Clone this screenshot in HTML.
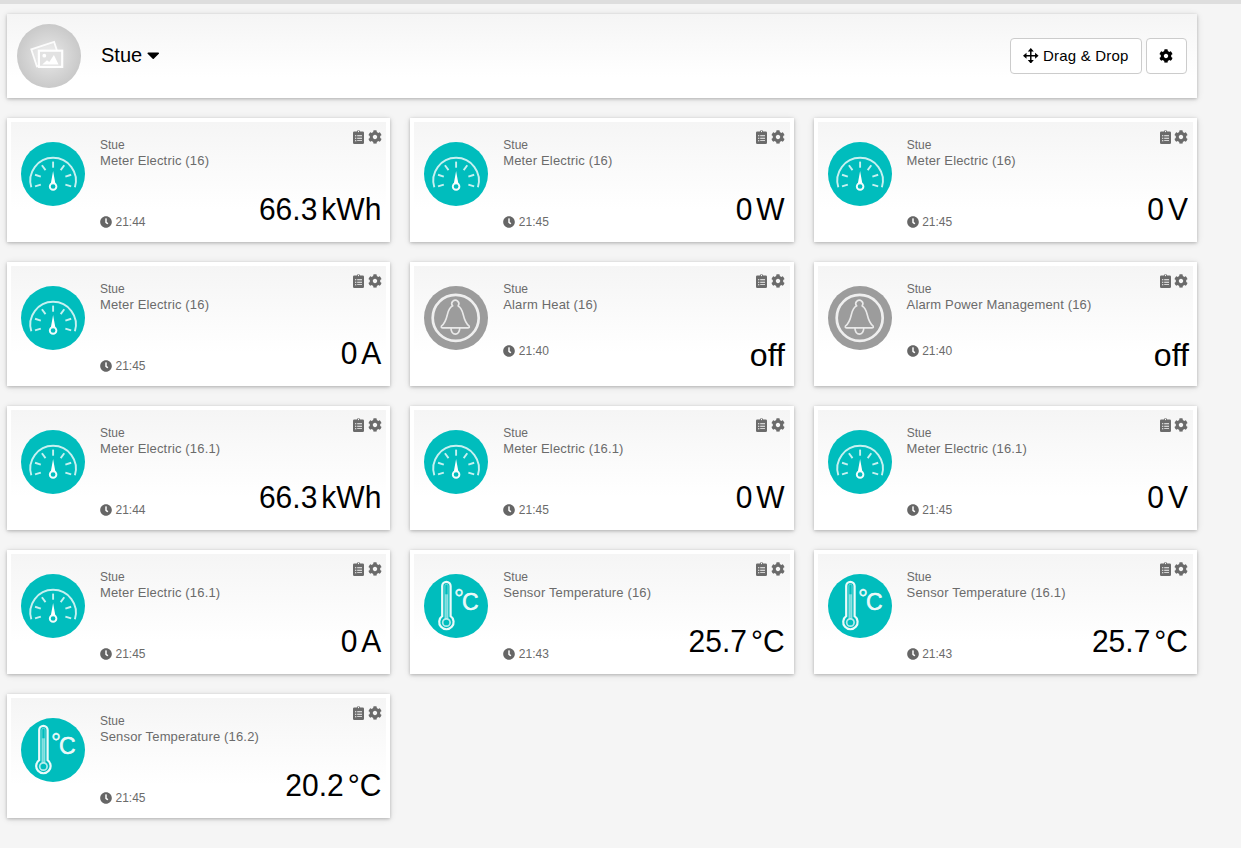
<!DOCTYPE html><html lang="da"><head><meta charset="utf-8"><title>Stue</title><style>
*{box-sizing:border-box;margin:0;padding:0}
html,body{width:1241px;height:848px;overflow:hidden}
body{background:#f5f5f5;font-family:"Liberation Sans",Arial,sans-serif;position:relative;color:#000}
.topbar{position:absolute;left:0;top:0;width:1241px;height:4px;background:#dedede}
.hdr{position:absolute;left:7px;top:14px;width:1190px;height:84px;background:linear-gradient(#f5f5f5,#fff 75%);box-shadow:0 1px 3px rgba(0,0,0,.21),0 1px 7px rgba(0,0,0,.12)}
.hicon{position:absolute;left:10px;top:10px;width:64px;height:64px}
.room{position:absolute;left:94px;top:29px;font-size:20px;line-height:24px;white-space:nowrap}
.caret{display:inline-block;width:12.500px;height:20px;vertical-align:-2.700px;margin-left:5px}
.btn{position:absolute;top:24px;height:36px;border:1px solid #ccc;border-radius:4px;background:#fff;font-size:15px;line-height:34px;white-space:nowrap}
.b1{left:1003px;width:132px}
.b1 .arr{position:absolute;left:12.200px;top:8.600px;width:15.600px;height:15.600px}
.b1 span{position:absolute;left:32px;top:0;letter-spacing:.2px}
.b2{left:1139px;width:41px}
.bcog{position:absolute;left:11.600px;top:10px;width:14px;height:14px}
.card{position:absolute;width:383.330px;height:124px;background:#fff;padding:4px;box-shadow:0 1px 3px rgba(0,0,0,.21),0 1px 7px rgba(0,0,0,.12)}
.in{position:relative;width:100%;height:100%;background:linear-gradient(#f5f5f5,#fff 75%)}
.dev{position:absolute;left:10px;top:20px;width:64px;height:64px}
.loc{position:absolute;left:89px;top:16px;font-size:12px;line-height:14px;color:#6b6b6b;white-space:nowrap}
.ttl{position:absolute;left:88.900px;top:31px;font-size:13px;line-height:15px;color:#6b6b6b;white-space:nowrap;letter-spacing:.16px}
.tm{position:absolute;left:89px;top:93px;font-size:12px;line-height:14px;color:#6b6b6b;white-space:nowrap}
.alarm .tm{top:78px}
.clk{position:absolute;left:0;top:.5px;width:12px;height:12px;color:#666}
.tm span{position:absolute;left:15.500px;top:0}
.tools{position:absolute;right:0;top:0;color:#6b6b6b}
.ico{position:absolute;height:14px}
.clp{right:22.330px;top:7.850px;width:11px}
.cg{right:4.500px;top:7.800px;width:14px}
.val{position:absolute;right:5px;top:70.800px;transform:scaleY(1.074);transform-origin:100% 27px;font-size:30px;line-height:34px;white-space:nowrap;color:#000}
.val .u{margin-left:4px}
.val.off{top:73.100px;right:4.500px;font-size:31px;transform:scaleX(1.035);transform-origin:100% 27px}

</style></head><body>
<div class="topbar"></div>
<div class="hdr"><svg class="hicon" viewBox="0 0 64 64"><defs><radialGradient id="hg" cx="50%" cy="50%" r="50%"><stop offset="0" stop-color="#e9e9e9"/><stop offset="1" stop-color="#c9c9c9"/></radialGradient></defs><circle cx="32" cy="32" r="32" fill="url(#hg)"/><g transform="rotate(-18 25 35)"><rect x="17.800" y="22.500" width="24" height="18" fill="#fff" fill-opacity=".25" stroke="#fff" stroke-opacity=".9" stroke-width="1.800"/></g><rect x="21.900" y="26.700" width="23.300" height="16.200" fill="#e2e2e2" stroke="#fff" stroke-opacity=".95" stroke-width="2.200"/><circle cx="27.300" cy="31.700" r="1.900" fill="#fff"/><path fill="#fff" d="M25.300 40.400L30 36.300L32.300 37.900L36.900 31L41.600 40.400Z"/></svg><div class="room">Stue<svg class="caret" viewBox="0 0 320 512"><path fill="currentColor" d="M31.300 192h257.300c17.800 0 26.700 21.500 14.100 34.100L174.100 354.800c-7.800 7.800-20.500 7.800-28.300 0L17.200 226.100C4.600 213.500 13.500 192 31.300 192z"/></svg></div>
<div class="btn b1"><svg class="arr" viewBox="0 0 16 16"><path fill="currentColor" d="M8 0L11.100 3.600H8.750V7.250H12.400V4.900L16 8L12.400 11.100V8.750H8.750V12.400H11.100L8 16L4.900 12.400H7.250V8.750H3.600V11.100L0 8L3.600 4.900V7.250H7.250V3.600H4.900Z"/></svg><span>Drag &amp; Drop</span></div>
<div class="btn b2"><svg class="bcog" viewBox="0 0 512 512"><path fill="currentColor" d="M487.4 315.7l-42.6-24.6c4.3-23.2 4.3-47 0-70.2l42.6-24.6c4.9-2.800 7.100-8.600 5.500-14-11.100-35.600-30-67.800-54.700-94.600-3.800-4.100-10-5.100-14.800-2.300L380.800 110c-17.900-15.400-38.500-27.300-60.800-35.100V25.800c0-5.600-3.900-10.500-9.400-11.700-36.700-8.200-74.300-7.800-109.200 0-5.500 1.200-9.400 6.100-9.400 11.700V75c-22.200 7.900-42.800 19.800-60.800 35.100L88.700 85.500c-4.900-2.800-11-1.900-14.800 2.300-24.700 26.700-43.600 58.900-54.700 94.600-1.700 5.400.6 11.200 5.500 14L67.300 221c-4.300 23.200-4.300 47 0 70.200l-42.600 24.600c-4.900 2.800-7.100 8.600-5.500 14 11.100 35.600 30 67.800 54.700 94.600 3.800 4.100 10 5.100 14.800 2.300l42.600-24.600c17.900 15.400 38.500 27.300 60.800 35.100v49.200c0 5.600 3.900 10.500 9.400 11.700 36.700 8.200 74.300 7.800 109.200 0 5.500-1.200 9.400-6.100 9.400-11.700v-49.200c22.200-7.900 42.800-19.800 60.800-35.100l42.600 24.600c4.900 2.800 11 1.900 14.800-2.300 24.700-26.700 43.600-58.900 54.700-94.600 1.500-5.500-.7-11.300-5.600-14.100zM256 336c-44.100 0-80-35.900-80-80s35.900-80 80-80 80 35.900 80 80-35.900 80-80 80z"/></svg></div></div>
<div class="card" style="left:7px;top:118px"><div class="in">
<svg class="dev" viewBox="0 0 64 64"><circle cx="32" cy="32" r="32" fill="#00bdbd"/><g fill="none" stroke="#fff" stroke-opacity=".78" stroke-width="1.9"><path d="M10.30 45.3A22.8 22.8 0 1 1 53.90 45.3"/><path d="M19.83 42.59L14.03 44.47"/><path d="M19.83 34.61L14.03 32.73"/><path d="M24.52 28.16L20.93 23.23"/><path d="M32.10 25.70L32.10 19.60"/><path d="M39.68 28.16L43.27 23.23"/><path d="M44.37 34.61L50.17 32.73"/><path d="M44.37 42.59L50.17 44.47"/><circle cx="32.1" cy="44.500" r="3.300" stroke-opacity=".95"/></g><path fill="#fff" d="M32.1 28.9L34.4 41.8Q32.1 40.4 29.8 41.8Z"/></svg>
<div class="loc">Stue</div><div class="ttl">Meter Electric (16)</div>
<div class="tm"><svg class="clk" viewBox="0 0 512 512"><path fill="currentColor" d="M256,8C119,8,8,119,8,256S119,504,256,504,504,393,504,256,393,8,256,8Zm92.49,313h0l-20,25a16,16,0,0,1-22.490,2.500h0l-67-49.720a40,40,0,0,1-15-31.230V112a16,16,0,0,1,16-16h32a16,16,0,0,1,16,16V256l58,42.500A16,16,0,0,1,348.490,321Z"/></svg><span>21:44</span></div>
<div class="tools"><svg class="ico clp" viewBox="0 0 11 14"><path fill="currentColor" fill-rule="evenodd" d="M1.300 1.500H3.800A1.750 1.750 0 0 1 7.200 1.500H9.700A1.300 1.300 0 0 1 11 2.800V12.700A1.300 1.300 0 0 1 9.700 14H1.300A1.300 1.300 0 0 1 0 12.700V2.800A1.300 1.300 0 0 1 1.300 1.500ZM5.500 .850a.65.65 0 1 1 0 1.300a.65.65 0 1 1 0-1.300zM2 5.200h1.300v1h-1.300z M2 7.700h1.300v1h-1.300z M2 10.150h1.300v1h-1.300zM4.200 5.250h4.800v.9h-4.800z M4.200 7.750h4.800v.9h-4.800z M4.200 10.200h4.800v.9h-4.800z"/></svg><svg class="ico cg" viewBox="0 0 512 512"><path fill="currentColor" d="M487.4 315.7l-42.6-24.6c4.3-23.2 4.3-47 0-70.2l42.6-24.6c4.9-2.800 7.100-8.600 5.500-14-11.100-35.600-30-67.800-54.700-94.600-3.800-4.100-10-5.100-14.800-2.300L380.800 110c-17.900-15.400-38.500-27.300-60.800-35.100V25.800c0-5.600-3.900-10.500-9.400-11.700-36.700-8.200-74.300-7.800-109.200 0-5.500 1.200-9.400 6.100-9.400 11.700V75c-22.200 7.900-42.800 19.800-60.800 35.100L88.700 85.500c-4.900-2.800-11-1.900-14.800 2.300-24.700 26.700-43.600 58.900-54.700 94.600-1.700 5.400.6 11.200 5.500 14L67.300 221c-4.300 23.200-4.300 47 0 70.200l-42.600 24.600c-4.900 2.800-7.100 8.600-5.500 14 11.100 35.600 30 67.800 54.700 94.600 3.800 4.100 10 5.100 14.800 2.300l42.600-24.600c17.900 15.400 38.500 27.300 60.800 35.100v49.200c0 5.600 3.900 10.500 9.400 11.700 36.700 8.200 74.300 7.800 109.200 0 5.500-1.200 9.400-6.100 9.400-11.700v-49.200c22.200-7.900 42.800-19.800 60.800-35.100l42.600 24.600c4.900 2.800 11 1.900 14.800-2.300 24.700-26.700 43.600-58.900 54.700-94.600 1.500-5.500-.7-11.300-5.600-14.100zM256 336c-44.100 0-80-35.900-80-80s35.900-80 80-80 80 35.900 80 80-35.900 80-80 80z"/></svg></div>
<div class="val"><span class="v">66.3</span><span class="u">kWh</span></div>
</div></div>
<div class="card" style="left:410.33px;top:118px"><div class="in">
<svg class="dev" viewBox="0 0 64 64"><circle cx="32" cy="32" r="32" fill="#00bdbd"/><g fill="none" stroke="#fff" stroke-opacity=".78" stroke-width="1.9"><path d="M10.30 45.3A22.8 22.8 0 1 1 53.90 45.3"/><path d="M19.83 42.59L14.03 44.47"/><path d="M19.83 34.61L14.03 32.73"/><path d="M24.52 28.16L20.93 23.23"/><path d="M32.10 25.70L32.10 19.60"/><path d="M39.68 28.16L43.27 23.23"/><path d="M44.37 34.61L50.17 32.73"/><path d="M44.37 42.59L50.17 44.47"/><circle cx="32.1" cy="44.500" r="3.300" stroke-opacity=".95"/></g><path fill="#fff" d="M32.1 28.9L34.4 41.8Q32.1 40.4 29.8 41.8Z"/></svg>
<div class="loc">Stue</div><div class="ttl">Meter Electric (16)</div>
<div class="tm"><svg class="clk" viewBox="0 0 512 512"><path fill="currentColor" d="M256,8C119,8,8,119,8,256S119,504,256,504,504,393,504,256,393,8,256,8Zm92.49,313h0l-20,25a16,16,0,0,1-22.490,2.500h0l-67-49.720a40,40,0,0,1-15-31.230V112a16,16,0,0,1,16-16h32a16,16,0,0,1,16,16V256l58,42.500A16,16,0,0,1,348.490,321Z"/></svg><span>21:45</span></div>
<div class="tools"><svg class="ico clp" viewBox="0 0 11 14"><path fill="currentColor" fill-rule="evenodd" d="M1.300 1.500H3.800A1.750 1.750 0 0 1 7.200 1.500H9.700A1.300 1.300 0 0 1 11 2.800V12.700A1.300 1.300 0 0 1 9.700 14H1.300A1.300 1.300 0 0 1 0 12.700V2.800A1.300 1.300 0 0 1 1.300 1.500ZM5.500 .850a.65.65 0 1 1 0 1.300a.65.65 0 1 1 0-1.300zM2 5.200h1.300v1h-1.300z M2 7.700h1.300v1h-1.300z M2 10.150h1.300v1h-1.300zM4.200 5.250h4.800v.9h-4.800z M4.200 7.750h4.800v.9h-4.800z M4.200 10.200h4.800v.9h-4.800z"/></svg><svg class="ico cg" viewBox="0 0 512 512"><path fill="currentColor" d="M487.4 315.7l-42.6-24.6c4.3-23.2 4.3-47 0-70.2l42.6-24.6c4.9-2.800 7.100-8.600 5.500-14-11.100-35.600-30-67.800-54.700-94.600-3.800-4.100-10-5.100-14.800-2.300L380.800 110c-17.900-15.400-38.500-27.300-60.800-35.100V25.800c0-5.600-3.900-10.500-9.400-11.700-36.700-8.200-74.300-7.800-109.200 0-5.500 1.200-9.400 6.100-9.400 11.700V75c-22.200 7.900-42.800 19.800-60.800 35.100L88.700 85.500c-4.900-2.800-11-1.900-14.800 2.300-24.700 26.700-43.600 58.900-54.700 94.600-1.700 5.400.6 11.200 5.500 14L67.300 221c-4.300 23.200-4.300 47 0 70.200l-42.600 24.600c-4.900 2.800-7.100 8.600-5.500 14 11.100 35.600 30 67.800 54.700 94.600 3.800 4.100 10 5.100 14.800 2.300l42.600-24.600c17.900 15.400 38.500 27.300 60.800 35.100v49.200c0 5.600 3.900 10.500 9.400 11.700 36.700 8.200 74.300 7.800 109.200 0 5.500-1.200 9.400-6.100 9.400-11.700v-49.200c22.200-7.900 42.800-19.800 60.800-35.100l42.600 24.600c4.900 2.800 11 1.900 14.800-2.300 24.700-26.700 43.600-58.900 54.700-94.600 1.500-5.500-.7-11.300-5.600-14.100zM256 336c-44.100 0-80-35.900-80-80s35.900-80 80-80 80 35.900 80 80-35.900 80-80 80z"/></svg></div>
<div class="val"><span class="v">0</span><span class="u">W</span></div>
</div></div>
<div class="card" style="left:813.67px;top:118px"><div class="in">
<svg class="dev" viewBox="0 0 64 64"><circle cx="32" cy="32" r="32" fill="#00bdbd"/><g fill="none" stroke="#fff" stroke-opacity=".78" stroke-width="1.9"><path d="M10.30 45.3A22.8 22.8 0 1 1 53.90 45.3"/><path d="M19.83 42.59L14.03 44.47"/><path d="M19.83 34.61L14.03 32.73"/><path d="M24.52 28.16L20.93 23.23"/><path d="M32.10 25.70L32.10 19.60"/><path d="M39.68 28.16L43.27 23.23"/><path d="M44.37 34.61L50.17 32.73"/><path d="M44.37 42.59L50.17 44.47"/><circle cx="32.1" cy="44.500" r="3.300" stroke-opacity=".95"/></g><path fill="#fff" d="M32.1 28.9L34.4 41.8Q32.1 40.4 29.8 41.8Z"/></svg>
<div class="loc">Stue</div><div class="ttl">Meter Electric (16)</div>
<div class="tm"><svg class="clk" viewBox="0 0 512 512"><path fill="currentColor" d="M256,8C119,8,8,119,8,256S119,504,256,504,504,393,504,256,393,8,256,8Zm92.49,313h0l-20,25a16,16,0,0,1-22.490,2.500h0l-67-49.720a40,40,0,0,1-15-31.230V112a16,16,0,0,1,16-16h32a16,16,0,0,1,16,16V256l58,42.500A16,16,0,0,1,348.490,321Z"/></svg><span>21:45</span></div>
<div class="tools"><svg class="ico clp" viewBox="0 0 11 14"><path fill="currentColor" fill-rule="evenodd" d="M1.300 1.500H3.800A1.750 1.750 0 0 1 7.200 1.500H9.700A1.300 1.300 0 0 1 11 2.800V12.700A1.300 1.300 0 0 1 9.700 14H1.300A1.300 1.300 0 0 1 0 12.700V2.800A1.300 1.300 0 0 1 1.300 1.500ZM5.500 .850a.65.65 0 1 1 0 1.300a.65.65 0 1 1 0-1.300zM2 5.200h1.300v1h-1.300z M2 7.700h1.300v1h-1.300z M2 10.150h1.300v1h-1.300zM4.200 5.250h4.800v.9h-4.800z M4.200 7.750h4.800v.9h-4.800z M4.200 10.200h4.800v.9h-4.800z"/></svg><svg class="ico cg" viewBox="0 0 512 512"><path fill="currentColor" d="M487.4 315.7l-42.6-24.6c4.3-23.2 4.3-47 0-70.2l42.6-24.6c4.9-2.800 7.100-8.600 5.500-14-11.100-35.600-30-67.800-54.700-94.600-3.800-4.100-10-5.100-14.800-2.300L380.800 110c-17.900-15.400-38.500-27.300-60.800-35.100V25.800c0-5.600-3.900-10.500-9.400-11.700-36.700-8.200-74.300-7.800-109.200 0-5.500 1.200-9.400 6.100-9.400 11.700V75c-22.200 7.900-42.800 19.800-60.800 35.100L88.700 85.500c-4.900-2.800-11-1.900-14.800 2.300-24.700 26.700-43.600 58.900-54.700 94.600-1.700 5.400.6 11.200 5.500 14L67.300 221c-4.300 23.200-4.300 47 0 70.200l-42.600 24.600c-4.900 2.800-7.100 8.600-5.500 14 11.100 35.600 30 67.800 54.700 94.600 3.800 4.100 10 5.100 14.800 2.300l42.600-24.600c17.900 15.400 38.500 27.300 60.800 35.100v49.200c0 5.600 3.900 10.500 9.400 11.700 36.700 8.200 74.300 7.800 109.200 0 5.500-1.200 9.400-6.100 9.400-11.700v-49.200c22.200-7.900 42.800-19.800 60.800-35.100l42.600 24.600c4.900 2.800 11 1.900 14.800-2.300 24.700-26.700 43.600-58.900 54.700-94.600 1.500-5.500-.7-11.300-5.600-14.100zM256 336c-44.100 0-80-35.900-80-80s35.900-80 80-80 80 35.900 80 80-35.900 80-80 80z"/></svg></div>
<div class="val"><span class="v">0</span><span class="u">V</span></div>
</div></div>
<div class="card" style="left:7px;top:262px"><div class="in">
<svg class="dev" viewBox="0 0 64 64"><circle cx="32" cy="32" r="32" fill="#00bdbd"/><g fill="none" stroke="#fff" stroke-opacity=".78" stroke-width="1.9"><path d="M10.30 45.3A22.8 22.8 0 1 1 53.90 45.3"/><path d="M19.83 42.59L14.03 44.47"/><path d="M19.83 34.61L14.03 32.73"/><path d="M24.52 28.16L20.93 23.23"/><path d="M32.10 25.70L32.10 19.60"/><path d="M39.68 28.16L43.27 23.23"/><path d="M44.37 34.61L50.17 32.73"/><path d="M44.37 42.59L50.17 44.47"/><circle cx="32.1" cy="44.500" r="3.300" stroke-opacity=".95"/></g><path fill="#fff" d="M32.1 28.9L34.4 41.8Q32.1 40.4 29.8 41.8Z"/></svg>
<div class="loc">Stue</div><div class="ttl">Meter Electric (16)</div>
<div class="tm"><svg class="clk" viewBox="0 0 512 512"><path fill="currentColor" d="M256,8C119,8,8,119,8,256S119,504,256,504,504,393,504,256,393,8,256,8Zm92.49,313h0l-20,25a16,16,0,0,1-22.490,2.500h0l-67-49.720a40,40,0,0,1-15-31.230V112a16,16,0,0,1,16-16h32a16,16,0,0,1,16,16V256l58,42.500A16,16,0,0,1,348.490,321Z"/></svg><span>21:45</span></div>
<div class="tools"><svg class="ico clp" viewBox="0 0 11 14"><path fill="currentColor" fill-rule="evenodd" d="M1.300 1.500H3.800A1.750 1.750 0 0 1 7.200 1.500H9.700A1.300 1.300 0 0 1 11 2.800V12.700A1.300 1.300 0 0 1 9.700 14H1.300A1.300 1.300 0 0 1 0 12.700V2.800A1.300 1.300 0 0 1 1.300 1.500ZM5.500 .850a.65.65 0 1 1 0 1.300a.65.65 0 1 1 0-1.300zM2 5.200h1.300v1h-1.300z M2 7.700h1.300v1h-1.300z M2 10.150h1.300v1h-1.300zM4.200 5.250h4.800v.9h-4.800z M4.200 7.750h4.800v.9h-4.800z M4.200 10.200h4.800v.9h-4.800z"/></svg><svg class="ico cg" viewBox="0 0 512 512"><path fill="currentColor" d="M487.4 315.7l-42.6-24.6c4.3-23.2 4.3-47 0-70.2l42.6-24.6c4.9-2.800 7.100-8.600 5.500-14-11.100-35.600-30-67.800-54.700-94.600-3.800-4.100-10-5.100-14.800-2.300L380.800 110c-17.900-15.400-38.500-27.300-60.800-35.100V25.800c0-5.600-3.900-10.500-9.400-11.700-36.700-8.200-74.300-7.800-109.200 0-5.500 1.200-9.400 6.100-9.400 11.700V75c-22.200 7.900-42.800 19.800-60.800 35.100L88.700 85.500c-4.900-2.800-11-1.900-14.800 2.300-24.700 26.700-43.600 58.900-54.700 94.600-1.700 5.400.6 11.200 5.500 14L67.300 221c-4.300 23.200-4.300 47 0 70.200l-42.600 24.600c-4.900 2.800-7.100 8.600-5.500 14 11.100 35.600 30 67.800 54.700 94.600 3.800 4.100 10 5.100 14.800 2.300l42.600-24.600c17.900 15.400 38.500 27.300 60.800 35.100v49.200c0 5.600 3.900 10.500 9.400 11.700 36.700 8.200 74.300 7.800 109.200 0 5.500-1.200 9.400-6.100 9.400-11.700v-49.200c22.200-7.900 42.800-19.800 60.800-35.100l42.600 24.600c4.900 2.800 11 1.900 14.800-2.300 24.700-26.700 43.600-58.900 54.700-94.600 1.500-5.500-.7-11.300-5.600-14.100zM256 336c-44.100 0-80-35.900-80-80s35.900-80 80-80 80 35.900 80 80-35.900 80-80 80z"/></svg></div>
<div class="val"><span class="v">0</span><span class="u">A</span></div>
</div></div>
<div class="card alarm" style="left:410.33px;top:262px"><div class="in">
<svg class="dev" viewBox="0 0 64 64"><circle cx="32" cy="32" r="32" fill="#9c9c9c"/><circle cx="31.7" cy="31.9" r="23" fill="none" stroke="#fff" stroke-opacity=".84" stroke-width="2.700"/><g fill="none" stroke="#fff" stroke-opacity=".78" stroke-width="1.600" stroke-linejoin="round"><path d="M28.500 19.900A3.500 3.500 0 1 1 34.100 19.900C36.500 21 38 23.500 39.200 28.500C40.700 35 42.500 38 45.200 40.200Q45.800 41.900 43.800 41.900L18.800 41.900Q16.800 41.900 17.400 40.200C20.100 38 21.900 35 23.400 28.500C24.600 23.500 26.100 21 28.800 19.800Z"/><path d="M26.900 42.300A4.500 6.800 0 0 0 35.800 42.300"/></g></svg>
<div class="loc">Stue</div><div class="ttl">Alarm Heat (16)</div>
<div class="tm"><svg class="clk" viewBox="0 0 512 512"><path fill="currentColor" d="M256,8C119,8,8,119,8,256S119,504,256,504,504,393,504,256,393,8,256,8Zm92.49,313h0l-20,25a16,16,0,0,1-22.490,2.500h0l-67-49.720a40,40,0,0,1-15-31.230V112a16,16,0,0,1,16-16h32a16,16,0,0,1,16,16V256l58,42.500A16,16,0,0,1,348.490,321Z"/></svg><span>21:40</span></div>
<div class="tools"><svg class="ico clp" viewBox="0 0 11 14"><path fill="currentColor" fill-rule="evenodd" d="M1.300 1.500H3.800A1.750 1.750 0 0 1 7.200 1.500H9.700A1.300 1.300 0 0 1 11 2.800V12.700A1.300 1.300 0 0 1 9.700 14H1.300A1.300 1.300 0 0 1 0 12.700V2.800A1.300 1.300 0 0 1 1.300 1.500ZM5.500 .850a.65.65 0 1 1 0 1.300a.65.65 0 1 1 0-1.300zM2 5.200h1.300v1h-1.300z M2 7.700h1.300v1h-1.300z M2 10.150h1.300v1h-1.300zM4.200 5.250h4.800v.9h-4.800z M4.200 7.750h4.800v.9h-4.800z M4.200 10.200h4.800v.9h-4.800z"/></svg><svg class="ico cg" viewBox="0 0 512 512"><path fill="currentColor" d="M487.4 315.7l-42.6-24.6c4.3-23.2 4.3-47 0-70.2l42.6-24.6c4.9-2.800 7.100-8.600 5.500-14-11.100-35.600-30-67.800-54.700-94.600-3.800-4.100-10-5.100-14.800-2.300L380.800 110c-17.900-15.400-38.500-27.300-60.800-35.100V25.800c0-5.600-3.900-10.500-9.400-11.700-36.700-8.200-74.300-7.800-109.200 0-5.500 1.200-9.400 6.100-9.400 11.700V75c-22.200 7.900-42.800 19.800-60.800 35.100L88.700 85.500c-4.900-2.800-11-1.900-14.800 2.300-24.700 26.700-43.600 58.900-54.700 94.600-1.700 5.400.6 11.200 5.500 14L67.300 221c-4.300 23.200-4.300 47 0 70.200l-42.600 24.600c-4.900 2.800-7.100 8.600-5.500 14 11.100 35.600 30 67.800 54.700 94.600 3.800 4.100 10 5.100 14.800 2.300l42.600-24.600c17.900 15.400 38.500 27.300 60.800 35.100v49.200c0 5.600 3.900 10.500 9.400 11.700 36.700 8.200 74.300 7.800 109.200 0 5.500-1.200 9.400-6.100 9.400-11.700v-49.200c22.200-7.900 42.800-19.800 60.800-35.100l42.600 24.600c4.900 2.800 11 1.900 14.800-2.300 24.700-26.700 43.600-58.900 54.700-94.600 1.500-5.500-.7-11.300-5.600-14.100zM256 336c-44.100 0-80-35.900-80-80s35.900-80 80-80 80 35.900 80 80-35.900 80-80 80z"/></svg></div>
<div class="val off"><span class="v">off</span></div>
</div></div>
<div class="card alarm" style="left:813.67px;top:262px"><div class="in">
<svg class="dev" viewBox="0 0 64 64"><circle cx="32" cy="32" r="32" fill="#9c9c9c"/><circle cx="31.7" cy="31.9" r="23" fill="none" stroke="#fff" stroke-opacity=".84" stroke-width="2.700"/><g fill="none" stroke="#fff" stroke-opacity=".78" stroke-width="1.600" stroke-linejoin="round"><path d="M28.500 19.900A3.500 3.500 0 1 1 34.100 19.900C36.500 21 38 23.500 39.200 28.500C40.700 35 42.500 38 45.200 40.200Q45.800 41.900 43.800 41.900L18.800 41.900Q16.800 41.900 17.400 40.200C20.100 38 21.900 35 23.400 28.500C24.600 23.500 26.100 21 28.800 19.800Z"/><path d="M26.900 42.300A4.500 6.800 0 0 0 35.800 42.300"/></g></svg>
<div class="loc">Stue</div><div class="ttl">Alarm Power Management (16)</div>
<div class="tm"><svg class="clk" viewBox="0 0 512 512"><path fill="currentColor" d="M256,8C119,8,8,119,8,256S119,504,256,504,504,393,504,256,393,8,256,8Zm92.49,313h0l-20,25a16,16,0,0,1-22.490,2.500h0l-67-49.720a40,40,0,0,1-15-31.230V112a16,16,0,0,1,16-16h32a16,16,0,0,1,16,16V256l58,42.500A16,16,0,0,1,348.490,321Z"/></svg><span>21:40</span></div>
<div class="tools"><svg class="ico clp" viewBox="0 0 11 14"><path fill="currentColor" fill-rule="evenodd" d="M1.300 1.500H3.800A1.750 1.750 0 0 1 7.200 1.500H9.700A1.300 1.300 0 0 1 11 2.800V12.700A1.300 1.300 0 0 1 9.700 14H1.300A1.300 1.300 0 0 1 0 12.700V2.800A1.300 1.300 0 0 1 1.300 1.500ZM5.500 .850a.65.65 0 1 1 0 1.300a.65.65 0 1 1 0-1.300zM2 5.200h1.300v1h-1.300z M2 7.700h1.300v1h-1.300z M2 10.150h1.300v1h-1.300zM4.200 5.250h4.800v.9h-4.800z M4.200 7.750h4.800v.9h-4.800z M4.200 10.200h4.800v.9h-4.800z"/></svg><svg class="ico cg" viewBox="0 0 512 512"><path fill="currentColor" d="M487.4 315.7l-42.6-24.6c4.3-23.2 4.3-47 0-70.2l42.6-24.6c4.9-2.800 7.100-8.600 5.500-14-11.100-35.600-30-67.800-54.700-94.600-3.800-4.100-10-5.100-14.800-2.300L380.800 110c-17.900-15.400-38.500-27.300-60.800-35.100V25.800c0-5.600-3.900-10.500-9.400-11.700-36.700-8.200-74.300-7.800-109.200 0-5.500 1.200-9.400 6.100-9.400 11.700V75c-22.200 7.900-42.800 19.800-60.800 35.100L88.700 85.500c-4.900-2.800-11-1.900-14.800 2.300-24.700 26.700-43.600 58.900-54.700 94.600-1.700 5.400.6 11.200 5.500 14L67.300 221c-4.300 23.200-4.300 47 0 70.200l-42.600 24.600c-4.900 2.800-7.100 8.600-5.500 14 11.100 35.600 30 67.800 54.700 94.600 3.800 4.100 10 5.100 14.800 2.300l42.600-24.600c17.900 15.400 38.500 27.300 60.800 35.100v49.200c0 5.600 3.900 10.500 9.400 11.700 36.700 8.200 74.300 7.800 109.200 0 5.500-1.200 9.400-6.100 9.400-11.700v-49.200c22.200-7.900 42.800-19.800 60.800-35.100l42.600 24.600c4.900 2.800 11 1.900 14.800-2.300 24.700-26.700 43.600-58.900 54.700-94.600 1.500-5.500-.7-11.300-5.600-14.100zM256 336c-44.100 0-80-35.900-80-80s35.900-80 80-80 80 35.900 80 80-35.900 80-80 80z"/></svg></div>
<div class="val off"><span class="v">off</span></div>
</div></div>
<div class="card" style="left:7px;top:406px"><div class="in">
<svg class="dev" viewBox="0 0 64 64"><circle cx="32" cy="32" r="32" fill="#00bdbd"/><g fill="none" stroke="#fff" stroke-opacity=".78" stroke-width="1.9"><path d="M10.30 45.3A22.8 22.8 0 1 1 53.90 45.3"/><path d="M19.83 42.59L14.03 44.47"/><path d="M19.83 34.61L14.03 32.73"/><path d="M24.52 28.16L20.93 23.23"/><path d="M32.10 25.70L32.10 19.60"/><path d="M39.68 28.16L43.27 23.23"/><path d="M44.37 34.61L50.17 32.73"/><path d="M44.37 42.59L50.17 44.47"/><circle cx="32.1" cy="44.500" r="3.300" stroke-opacity=".95"/></g><path fill="#fff" d="M32.1 28.9L34.4 41.8Q32.1 40.4 29.8 41.8Z"/></svg>
<div class="loc">Stue</div><div class="ttl">Meter Electric (16.1)</div>
<div class="tm"><svg class="clk" viewBox="0 0 512 512"><path fill="currentColor" d="M256,8C119,8,8,119,8,256S119,504,256,504,504,393,504,256,393,8,256,8Zm92.49,313h0l-20,25a16,16,0,0,1-22.490,2.500h0l-67-49.720a40,40,0,0,1-15-31.230V112a16,16,0,0,1,16-16h32a16,16,0,0,1,16,16V256l58,42.500A16,16,0,0,1,348.490,321Z"/></svg><span>21:44</span></div>
<div class="tools"><svg class="ico clp" viewBox="0 0 11 14"><path fill="currentColor" fill-rule="evenodd" d="M1.300 1.500H3.800A1.750 1.750 0 0 1 7.200 1.500H9.700A1.300 1.300 0 0 1 11 2.800V12.700A1.300 1.300 0 0 1 9.700 14H1.300A1.300 1.300 0 0 1 0 12.700V2.800A1.300 1.300 0 0 1 1.300 1.500ZM5.500 .850a.65.65 0 1 1 0 1.300a.65.65 0 1 1 0-1.300zM2 5.200h1.300v1h-1.300z M2 7.700h1.300v1h-1.300z M2 10.150h1.300v1h-1.300zM4.200 5.250h4.800v.9h-4.800z M4.200 7.750h4.800v.9h-4.800z M4.200 10.200h4.800v.9h-4.800z"/></svg><svg class="ico cg" viewBox="0 0 512 512"><path fill="currentColor" d="M487.4 315.7l-42.6-24.6c4.3-23.2 4.3-47 0-70.2l42.6-24.6c4.9-2.800 7.100-8.600 5.500-14-11.100-35.600-30-67.800-54.700-94.600-3.800-4.100-10-5.100-14.800-2.300L380.800 110c-17.900-15.400-38.500-27.300-60.800-35.100V25.800c0-5.600-3.900-10.500-9.400-11.700-36.700-8.200-74.300-7.800-109.200 0-5.500 1.200-9.400 6.100-9.400 11.700V75c-22.200 7.900-42.800 19.800-60.800 35.100L88.700 85.500c-4.900-2.800-11-1.900-14.800 2.300-24.700 26.700-43.600 58.900-54.700 94.600-1.700 5.400.6 11.200 5.500 14L67.300 221c-4.300 23.200-4.300 47 0 70.200l-42.600 24.600c-4.900 2.800-7.100 8.600-5.500 14 11.100 35.600 30 67.800 54.700 94.600 3.800 4.100 10 5.100 14.800 2.300l42.600-24.600c17.900 15.400 38.500 27.300 60.800 35.100v49.200c0 5.600 3.900 10.500 9.400 11.700 36.700 8.200 74.300 7.800 109.200 0 5.500-1.200 9.400-6.100 9.400-11.700v-49.200c22.200-7.900 42.800-19.800 60.800-35.100l42.600 24.600c4.900 2.800 11 1.900 14.800-2.300 24.700-26.700 43.600-58.900 54.700-94.600 1.500-5.500-.7-11.300-5.600-14.100zM256 336c-44.100 0-80-35.900-80-80s35.900-80 80-80 80 35.900 80 80-35.900 80-80 80z"/></svg></div>
<div class="val"><span class="v">66.3</span><span class="u">kWh</span></div>
</div></div>
<div class="card" style="left:410.33px;top:406px"><div class="in">
<svg class="dev" viewBox="0 0 64 64"><circle cx="32" cy="32" r="32" fill="#00bdbd"/><g fill="none" stroke="#fff" stroke-opacity=".78" stroke-width="1.9"><path d="M10.30 45.3A22.8 22.8 0 1 1 53.90 45.3"/><path d="M19.83 42.59L14.03 44.47"/><path d="M19.83 34.61L14.03 32.73"/><path d="M24.52 28.16L20.93 23.23"/><path d="M32.10 25.70L32.10 19.60"/><path d="M39.68 28.16L43.27 23.23"/><path d="M44.37 34.61L50.17 32.73"/><path d="M44.37 42.59L50.17 44.47"/><circle cx="32.1" cy="44.500" r="3.300" stroke-opacity=".95"/></g><path fill="#fff" d="M32.1 28.9L34.4 41.8Q32.1 40.4 29.8 41.8Z"/></svg>
<div class="loc">Stue</div><div class="ttl">Meter Electric (16.1)</div>
<div class="tm"><svg class="clk" viewBox="0 0 512 512"><path fill="currentColor" d="M256,8C119,8,8,119,8,256S119,504,256,504,504,393,504,256,393,8,256,8Zm92.49,313h0l-20,25a16,16,0,0,1-22.490,2.500h0l-67-49.720a40,40,0,0,1-15-31.230V112a16,16,0,0,1,16-16h32a16,16,0,0,1,16,16V256l58,42.500A16,16,0,0,1,348.490,321Z"/></svg><span>21:45</span></div>
<div class="tools"><svg class="ico clp" viewBox="0 0 11 14"><path fill="currentColor" fill-rule="evenodd" d="M1.300 1.500H3.800A1.750 1.750 0 0 1 7.200 1.500H9.700A1.300 1.300 0 0 1 11 2.800V12.700A1.300 1.300 0 0 1 9.700 14H1.300A1.300 1.300 0 0 1 0 12.700V2.800A1.300 1.300 0 0 1 1.300 1.500ZM5.500 .850a.65.65 0 1 1 0 1.300a.65.65 0 1 1 0-1.300zM2 5.200h1.300v1h-1.300z M2 7.700h1.300v1h-1.300z M2 10.150h1.300v1h-1.300zM4.200 5.250h4.800v.9h-4.800z M4.200 7.750h4.800v.9h-4.800z M4.200 10.200h4.800v.9h-4.800z"/></svg><svg class="ico cg" viewBox="0 0 512 512"><path fill="currentColor" d="M487.4 315.7l-42.6-24.6c4.3-23.2 4.3-47 0-70.2l42.6-24.6c4.9-2.800 7.100-8.600 5.500-14-11.100-35.600-30-67.800-54.700-94.600-3.800-4.100-10-5.100-14.800-2.300L380.800 110c-17.900-15.400-38.500-27.300-60.800-35.100V25.800c0-5.600-3.900-10.500-9.400-11.700-36.700-8.200-74.300-7.800-109.200 0-5.500 1.200-9.400 6.100-9.400 11.700V75c-22.200 7.900-42.800 19.800-60.800 35.100L88.700 85.500c-4.900-2.800-11-1.900-14.800 2.300-24.700 26.700-43.600 58.900-54.700 94.600-1.700 5.400.6 11.200 5.500 14L67.300 221c-4.300 23.200-4.300 47 0 70.200l-42.600 24.600c-4.900 2.800-7.100 8.600-5.500 14 11.100 35.600 30 67.800 54.700 94.600 3.800 4.100 10 5.100 14.800 2.300l42.600-24.600c17.900 15.400 38.500 27.300 60.800 35.100v49.200c0 5.600 3.900 10.500 9.400 11.700 36.700 8.200 74.300 7.800 109.200 0 5.500-1.200 9.400-6.100 9.400-11.700v-49.200c22.200-7.900 42.800-19.800 60.800-35.100l42.600 24.600c4.900 2.800 11 1.900 14.800-2.300 24.700-26.700 43.600-58.900 54.700-94.600 1.500-5.500-.7-11.300-5.600-14.100zM256 336c-44.100 0-80-35.900-80-80s35.900-80 80-80 80 35.900 80 80-35.900 80-80 80z"/></svg></div>
<div class="val"><span class="v">0</span><span class="u">W</span></div>
</div></div>
<div class="card" style="left:813.67px;top:406px"><div class="in">
<svg class="dev" viewBox="0 0 64 64"><circle cx="32" cy="32" r="32" fill="#00bdbd"/><g fill="none" stroke="#fff" stroke-opacity=".78" stroke-width="1.9"><path d="M10.30 45.3A22.8 22.8 0 1 1 53.90 45.3"/><path d="M19.83 42.59L14.03 44.47"/><path d="M19.83 34.61L14.03 32.73"/><path d="M24.52 28.16L20.93 23.23"/><path d="M32.10 25.70L32.10 19.60"/><path d="M39.68 28.16L43.27 23.23"/><path d="M44.37 34.61L50.17 32.73"/><path d="M44.37 42.59L50.17 44.47"/><circle cx="32.1" cy="44.500" r="3.300" stroke-opacity=".95"/></g><path fill="#fff" d="M32.1 28.9L34.4 41.8Q32.1 40.4 29.8 41.8Z"/></svg>
<div class="loc">Stue</div><div class="ttl">Meter Electric (16.1)</div>
<div class="tm"><svg class="clk" viewBox="0 0 512 512"><path fill="currentColor" d="M256,8C119,8,8,119,8,256S119,504,256,504,504,393,504,256,393,8,256,8Zm92.49,313h0l-20,25a16,16,0,0,1-22.490,2.500h0l-67-49.720a40,40,0,0,1-15-31.230V112a16,16,0,0,1,16-16h32a16,16,0,0,1,16,16V256l58,42.500A16,16,0,0,1,348.490,321Z"/></svg><span>21:45</span></div>
<div class="tools"><svg class="ico clp" viewBox="0 0 11 14"><path fill="currentColor" fill-rule="evenodd" d="M1.300 1.500H3.800A1.750 1.750 0 0 1 7.200 1.500H9.700A1.300 1.300 0 0 1 11 2.800V12.700A1.300 1.300 0 0 1 9.700 14H1.300A1.300 1.300 0 0 1 0 12.700V2.800A1.300 1.300 0 0 1 1.300 1.500ZM5.500 .850a.65.65 0 1 1 0 1.300a.65.65 0 1 1 0-1.300zM2 5.200h1.300v1h-1.300z M2 7.700h1.300v1h-1.300z M2 10.150h1.300v1h-1.300zM4.200 5.250h4.800v.9h-4.800z M4.200 7.750h4.800v.9h-4.800z M4.200 10.200h4.800v.9h-4.800z"/></svg><svg class="ico cg" viewBox="0 0 512 512"><path fill="currentColor" d="M487.4 315.7l-42.6-24.6c4.3-23.2 4.3-47 0-70.2l42.6-24.6c4.9-2.800 7.100-8.600 5.500-14-11.100-35.600-30-67.800-54.700-94.600-3.800-4.100-10-5.100-14.800-2.300L380.800 110c-17.900-15.400-38.500-27.300-60.800-35.100V25.800c0-5.600-3.900-10.500-9.400-11.700-36.700-8.200-74.300-7.800-109.200 0-5.500 1.200-9.400 6.100-9.400 11.700V75c-22.200 7.900-42.800 19.800-60.800 35.100L88.700 85.500c-4.900-2.800-11-1.900-14.800 2.300-24.700 26.700-43.600 58.900-54.700 94.600-1.700 5.400.6 11.200 5.500 14L67.300 221c-4.300 23.200-4.300 47 0 70.200l-42.600 24.600c-4.900 2.800-7.100 8.600-5.500 14 11.100 35.600 30 67.800 54.700 94.600 3.800 4.100 10 5.100 14.800 2.300l42.600-24.600c17.900 15.400 38.500 27.300 60.800 35.100v49.200c0 5.600 3.900 10.500 9.400 11.700 36.700 8.200 74.300 7.800 109.200 0 5.500-1.200 9.400-6.100 9.400-11.700v-49.200c22.200-7.900 42.800-19.800 60.800-35.100l42.600 24.600c4.900 2.800 11 1.900 14.800-2.300 24.700-26.700 43.600-58.900 54.700-94.600 1.500-5.500-.7-11.300-5.600-14.100zM256 336c-44.100 0-80-35.900-80-80s35.900-80 80-80 80 35.900 80 80-35.900 80-80 80z"/></svg></div>
<div class="val"><span class="v">0</span><span class="u">V</span></div>
</div></div>
<div class="card" style="left:7px;top:550px"><div class="in">
<svg class="dev" viewBox="0 0 64 64"><circle cx="32" cy="32" r="32" fill="#00bdbd"/><g fill="none" stroke="#fff" stroke-opacity=".78" stroke-width="1.9"><path d="M10.30 45.3A22.8 22.8 0 1 1 53.90 45.3"/><path d="M19.83 42.59L14.03 44.47"/><path d="M19.83 34.61L14.03 32.73"/><path d="M24.52 28.16L20.93 23.23"/><path d="M32.10 25.70L32.10 19.60"/><path d="M39.68 28.16L43.27 23.23"/><path d="M44.37 34.61L50.17 32.73"/><path d="M44.37 42.59L50.17 44.47"/><circle cx="32.1" cy="44.500" r="3.300" stroke-opacity=".95"/></g><path fill="#fff" d="M32.1 28.9L34.4 41.8Q32.1 40.4 29.8 41.8Z"/></svg>
<div class="loc">Stue</div><div class="ttl">Meter Electric (16.1)</div>
<div class="tm"><svg class="clk" viewBox="0 0 512 512"><path fill="currentColor" d="M256,8C119,8,8,119,8,256S119,504,256,504,504,393,504,256,393,8,256,8Zm92.49,313h0l-20,25a16,16,0,0,1-22.490,2.500h0l-67-49.720a40,40,0,0,1-15-31.230V112a16,16,0,0,1,16-16h32a16,16,0,0,1,16,16V256l58,42.500A16,16,0,0,1,348.490,321Z"/></svg><span>21:45</span></div>
<div class="tools"><svg class="ico clp" viewBox="0 0 11 14"><path fill="currentColor" fill-rule="evenodd" d="M1.300 1.500H3.800A1.750 1.750 0 0 1 7.200 1.500H9.700A1.300 1.300 0 0 1 11 2.800V12.700A1.300 1.300 0 0 1 9.700 14H1.300A1.300 1.300 0 0 1 0 12.700V2.800A1.300 1.300 0 0 1 1.300 1.500ZM5.500 .850a.65.65 0 1 1 0 1.300a.65.65 0 1 1 0-1.300zM2 5.200h1.300v1h-1.300z M2 7.700h1.300v1h-1.300z M2 10.150h1.300v1h-1.300zM4.200 5.250h4.800v.9h-4.800z M4.200 7.750h4.800v.9h-4.800z M4.200 10.200h4.800v.9h-4.800z"/></svg><svg class="ico cg" viewBox="0 0 512 512"><path fill="currentColor" d="M487.4 315.7l-42.6-24.6c4.3-23.2 4.3-47 0-70.2l42.6-24.6c4.9-2.800 7.100-8.600 5.500-14-11.100-35.600-30-67.800-54.700-94.600-3.800-4.100-10-5.100-14.800-2.300L380.800 110c-17.900-15.400-38.500-27.300-60.800-35.100V25.800c0-5.600-3.900-10.500-9.400-11.700-36.700-8.200-74.300-7.800-109.200 0-5.500 1.200-9.400 6.100-9.400 11.700V75c-22.200 7.900-42.800 19.800-60.800 35.100L88.700 85.500c-4.900-2.800-11-1.900-14.800 2.300-24.700 26.700-43.600 58.900-54.700 94.600-1.700 5.400.6 11.200 5.500 14L67.300 221c-4.300 23.200-4.300 47 0 70.200l-42.600 24.600c-4.900 2.800-7.100 8.600-5.500 14 11.100 35.600 30 67.800 54.700 94.600 3.800 4.100 10 5.100 14.800 2.300l42.600-24.600c17.900 15.400 38.500 27.300 60.800 35.100v49.200c0 5.600 3.900 10.500 9.400 11.700 36.700 8.200 74.300 7.800 109.200 0 5.500-1.200 9.400-6.100 9.400-11.700v-49.200c22.200-7.900 42.800-19.800 60.800-35.100l42.600 24.600c4.900 2.800 11 1.900 14.800-2.300 24.700-26.700 43.600-58.900 54.700-94.600 1.500-5.500-.7-11.300-5.600-14.100zM256 336c-44.100 0-80-35.900-80-80s35.900-80 80-80 80 35.900 80 80-35.900 80-80 80z"/></svg></div>
<div class="val"><span class="v">0</span><span class="u">A</span></div>
</div></div>
<div class="card" style="left:410.33px;top:550px"><div class="in">
<svg class="dev" viewBox="0 0 64 64"><circle cx="32" cy="32" r="32" fill="#00bdbd"/><g transform="translate(.5 0)"><path fill="none" stroke="#fff" stroke-opacity=".92" stroke-width="2.200" d="M17.700 42.200V12A4.200 4.200 0 0 1 26.100 12V42.200A7.200 7.200 0 1 1 17.700 42.200Z"/><path fill="#fff" fill-opacity=".45" d="M20.400 20.300h3.100V44.500h-3.100z"/><path fill="none" stroke="#fff" stroke-opacity=".55" stroke-width=".7" d="M20.400 44.500V11.800A1.550 1.550 0 0 1 23.500 11.800V44.500"/><circle cx="21.9" cy="48.500" r="3.700" fill="none" stroke="#fff" stroke-opacity=".7" stroke-width="1.700"/></g><text x="30.100" y="33.200" font-size="25" stroke="#fff" stroke-width=".3" fill="#fff" fill-opacity=".92" font-family="Liberation Sans, Arial, sans-serif">°</text><text x="38" y="35.800" font-size="23" stroke="#fff" stroke-width=".5" fill="#fff" fill-opacity=".92" font-family="Liberation Sans, Arial, sans-serif">C</text></svg>
<div class="loc">Stue</div><div class="ttl">Sensor Temperature (16)</div>
<div class="tm"><svg class="clk" viewBox="0 0 512 512"><path fill="currentColor" d="M256,8C119,8,8,119,8,256S119,504,256,504,504,393,504,256,393,8,256,8Zm92.49,313h0l-20,25a16,16,0,0,1-22.490,2.500h0l-67-49.720a40,40,0,0,1-15-31.230V112a16,16,0,0,1,16-16h32a16,16,0,0,1,16,16V256l58,42.500A16,16,0,0,1,348.490,321Z"/></svg><span>21:43</span></div>
<div class="tools"><svg class="ico clp" viewBox="0 0 11 14"><path fill="currentColor" fill-rule="evenodd" d="M1.300 1.500H3.800A1.750 1.750 0 0 1 7.200 1.500H9.700A1.300 1.300 0 0 1 11 2.800V12.700A1.300 1.300 0 0 1 9.700 14H1.300A1.300 1.300 0 0 1 0 12.700V2.800A1.300 1.300 0 0 1 1.300 1.500ZM5.500 .850a.65.65 0 1 1 0 1.300a.65.65 0 1 1 0-1.300zM2 5.200h1.300v1h-1.300z M2 7.700h1.300v1h-1.300z M2 10.150h1.300v1h-1.300zM4.200 5.250h4.800v.9h-4.800z M4.200 7.750h4.800v.9h-4.800z M4.200 10.200h4.800v.9h-4.800z"/></svg><svg class="ico cg" viewBox="0 0 512 512"><path fill="currentColor" d="M487.4 315.7l-42.6-24.6c4.3-23.2 4.3-47 0-70.2l42.6-24.6c4.9-2.800 7.100-8.600 5.500-14-11.100-35.600-30-67.800-54.700-94.600-3.800-4.100-10-5.100-14.800-2.300L380.800 110c-17.900-15.400-38.500-27.300-60.800-35.100V25.800c0-5.600-3.900-10.500-9.400-11.700-36.700-8.200-74.300-7.800-109.200 0-5.500 1.200-9.400 6.100-9.400 11.700V75c-22.200 7.900-42.800 19.800-60.800 35.100L88.700 85.500c-4.900-2.800-11-1.900-14.800 2.300-24.700 26.700-43.600 58.900-54.700 94.600-1.700 5.400.6 11.200 5.500 14L67.300 221c-4.300 23.200-4.300 47 0 70.200l-42.600 24.600c-4.900 2.800-7.100 8.600-5.500 14 11.100 35.600 30 67.800 54.700 94.600 3.800 4.100 10 5.100 14.800 2.300l42.600-24.600c17.900 15.400 38.500 27.300 60.800 35.100v49.200c0 5.600 3.900 10.500 9.400 11.700 36.700 8.200 74.300 7.800 109.200 0 5.500-1.200 9.400-6.100 9.400-11.700v-49.200c22.200-7.900 42.800-19.800 60.800-35.100l42.600 24.600c4.900 2.800 11 1.900 14.800-2.300 24.700-26.700 43.600-58.900 54.700-94.600 1.500-5.500-.7-11.300-5.600-14.100zM256 336c-44.100 0-80-35.900-80-80s35.900-80 80-80 80 35.900 80 80-35.900 80-80 80z"/></svg></div>
<div class="val"><span class="v">25.7</span><span class="u">°C</span></div>
</div></div>
<div class="card" style="left:813.67px;top:550px"><div class="in">
<svg class="dev" viewBox="0 0 64 64"><circle cx="32" cy="32" r="32" fill="#00bdbd"/><g transform="translate(.5 0)"><path fill="none" stroke="#fff" stroke-opacity=".92" stroke-width="2.200" d="M17.700 42.200V12A4.200 4.200 0 0 1 26.100 12V42.200A7.200 7.200 0 1 1 17.700 42.200Z"/><path fill="#fff" fill-opacity=".45" d="M20.400 20.300h3.100V44.500h-3.100z"/><path fill="none" stroke="#fff" stroke-opacity=".55" stroke-width=".7" d="M20.400 44.500V11.800A1.550 1.550 0 0 1 23.500 11.800V44.500"/><circle cx="21.9" cy="48.500" r="3.700" fill="none" stroke="#fff" stroke-opacity=".7" stroke-width="1.700"/></g><text x="30.100" y="33.200" font-size="25" stroke="#fff" stroke-width=".3" fill="#fff" fill-opacity=".92" font-family="Liberation Sans, Arial, sans-serif">°</text><text x="38" y="35.800" font-size="23" stroke="#fff" stroke-width=".5" fill="#fff" fill-opacity=".92" font-family="Liberation Sans, Arial, sans-serif">C</text></svg>
<div class="loc">Stue</div><div class="ttl">Sensor Temperature (16.1)</div>
<div class="tm"><svg class="clk" viewBox="0 0 512 512"><path fill="currentColor" d="M256,8C119,8,8,119,8,256S119,504,256,504,504,393,504,256,393,8,256,8Zm92.49,313h0l-20,25a16,16,0,0,1-22.490,2.500h0l-67-49.720a40,40,0,0,1-15-31.230V112a16,16,0,0,1,16-16h32a16,16,0,0,1,16,16V256l58,42.500A16,16,0,0,1,348.490,321Z"/></svg><span>21:43</span></div>
<div class="tools"><svg class="ico clp" viewBox="0 0 11 14"><path fill="currentColor" fill-rule="evenodd" d="M1.300 1.500H3.800A1.750 1.750 0 0 1 7.200 1.500H9.700A1.300 1.300 0 0 1 11 2.800V12.700A1.300 1.300 0 0 1 9.700 14H1.300A1.300 1.300 0 0 1 0 12.700V2.800A1.300 1.300 0 0 1 1.300 1.500ZM5.500 .850a.65.65 0 1 1 0 1.300a.65.65 0 1 1 0-1.300zM2 5.200h1.300v1h-1.300z M2 7.700h1.300v1h-1.300z M2 10.150h1.300v1h-1.300zM4.200 5.250h4.800v.9h-4.800z M4.200 7.750h4.800v.9h-4.800z M4.200 10.200h4.800v.9h-4.800z"/></svg><svg class="ico cg" viewBox="0 0 512 512"><path fill="currentColor" d="M487.4 315.7l-42.6-24.6c4.3-23.2 4.3-47 0-70.2l42.6-24.6c4.9-2.800 7.100-8.600 5.500-14-11.100-35.600-30-67.800-54.700-94.600-3.800-4.100-10-5.100-14.800-2.300L380.800 110c-17.900-15.400-38.500-27.300-60.800-35.100V25.800c0-5.600-3.900-10.500-9.400-11.700-36.700-8.200-74.300-7.800-109.200 0-5.500 1.200-9.400 6.100-9.400 11.700V75c-22.200 7.900-42.800 19.800-60.800 35.100L88.700 85.500c-4.900-2.800-11-1.900-14.800 2.300-24.700 26.700-43.600 58.900-54.700 94.600-1.700 5.400.6 11.200 5.500 14L67.300 221c-4.300 23.200-4.300 47 0 70.200l-42.600 24.600c-4.900 2.800-7.100 8.600-5.500 14 11.100 35.600 30 67.800 54.700 94.600 3.800 4.100 10 5.100 14.800 2.300l42.600-24.600c17.900 15.400 38.500 27.300 60.800 35.100v49.200c0 5.600 3.900 10.500 9.400 11.700 36.700 8.200 74.300 7.800 109.200 0 5.500-1.200 9.400-6.100 9.400-11.700v-49.200c22.200-7.900 42.800-19.800 60.800-35.100l42.600 24.600c4.900 2.800 11 1.900 14.800-2.300 24.700-26.700 43.600-58.900 54.700-94.600 1.500-5.500-.7-11.300-5.600-14.100zM256 336c-44.100 0-80-35.900-80-80s35.900-80 80-80 80 35.900 80 80-35.900 80-80 80z"/></svg></div>
<div class="val"><span class="v">25.7</span><span class="u">°C</span></div>
</div></div>
<div class="card" style="left:7px;top:694px"><div class="in">
<svg class="dev" viewBox="0 0 64 64"><circle cx="32" cy="32" r="32" fill="#00bdbd"/><g transform="translate(.5 0)"><path fill="none" stroke="#fff" stroke-opacity=".92" stroke-width="2.200" d="M17.700 42.200V12A4.200 4.200 0 0 1 26.100 12V42.200A7.200 7.200 0 1 1 17.700 42.200Z"/><path fill="#fff" fill-opacity=".45" d="M20.400 20.300h3.100V44.500h-3.100z"/><path fill="none" stroke="#fff" stroke-opacity=".55" stroke-width=".7" d="M20.400 44.500V11.800A1.550 1.550 0 0 1 23.500 11.800V44.500"/><circle cx="21.9" cy="48.500" r="3.700" fill="none" stroke="#fff" stroke-opacity=".7" stroke-width="1.700"/></g><text x="30.100" y="33.200" font-size="25" stroke="#fff" stroke-width=".3" fill="#fff" fill-opacity=".92" font-family="Liberation Sans, Arial, sans-serif">°</text><text x="38" y="35.800" font-size="23" stroke="#fff" stroke-width=".5" fill="#fff" fill-opacity=".92" font-family="Liberation Sans, Arial, sans-serif">C</text></svg>
<div class="loc">Stue</div><div class="ttl">Sensor Temperature (16.2)</div>
<div class="tm"><svg class="clk" viewBox="0 0 512 512"><path fill="currentColor" d="M256,8C119,8,8,119,8,256S119,504,256,504,504,393,504,256,393,8,256,8Zm92.49,313h0l-20,25a16,16,0,0,1-22.490,2.500h0l-67-49.720a40,40,0,0,1-15-31.230V112a16,16,0,0,1,16-16h32a16,16,0,0,1,16,16V256l58,42.500A16,16,0,0,1,348.490,321Z"/></svg><span>21:45</span></div>
<div class="tools"><svg class="ico clp" viewBox="0 0 11 14"><path fill="currentColor" fill-rule="evenodd" d="M1.300 1.500H3.800A1.750 1.750 0 0 1 7.200 1.500H9.700A1.300 1.300 0 0 1 11 2.800V12.700A1.300 1.300 0 0 1 9.700 14H1.300A1.300 1.300 0 0 1 0 12.700V2.800A1.300 1.300 0 0 1 1.300 1.500ZM5.500 .850a.65.65 0 1 1 0 1.300a.65.65 0 1 1 0-1.300zM2 5.200h1.300v1h-1.300z M2 7.700h1.300v1h-1.300z M2 10.150h1.300v1h-1.300zM4.200 5.250h4.800v.9h-4.800z M4.200 7.750h4.800v.9h-4.800z M4.200 10.200h4.800v.9h-4.800z"/></svg><svg class="ico cg" viewBox="0 0 512 512"><path fill="currentColor" d="M487.4 315.7l-42.6-24.6c4.3-23.2 4.3-47 0-70.2l42.6-24.6c4.9-2.800 7.100-8.600 5.500-14-11.100-35.600-30-67.800-54.700-94.600-3.800-4.100-10-5.100-14.800-2.300L380.800 110c-17.900-15.400-38.500-27.300-60.800-35.100V25.800c0-5.600-3.900-10.500-9.400-11.700-36.700-8.200-74.300-7.800-109.200 0-5.500 1.200-9.400 6.100-9.400 11.700V75c-22.200 7.900-42.800 19.800-60.800 35.100L88.700 85.500c-4.900-2.800-11-1.900-14.800 2.300-24.700 26.700-43.600 58.900-54.700 94.600-1.700 5.400.6 11.200 5.500 14L67.300 221c-4.300 23.200-4.300 47 0 70.200l-42.600 24.600c-4.900 2.800-7.100 8.600-5.500 14 11.100 35.600 30 67.800 54.700 94.600 3.800 4.100 10 5.100 14.800 2.300l42.600-24.600c17.900 15.400 38.500 27.300 60.800 35.100v49.200c0 5.600 3.900 10.500 9.400 11.700 36.700 8.200 74.300 7.800 109.200 0 5.500-1.200 9.400-6.100 9.400-11.700v-49.200c22.200-7.900 42.800-19.800 60.800-35.100l42.600 24.600c4.900 2.800 11 1.900 14.800-2.300 24.700-26.700 43.600-58.900 54.700-94.600 1.500-5.500-.7-11.300-5.600-14.100zM256 336c-44.100 0-80-35.900-80-80s35.900-80 80-80 80 35.900 80 80-35.900 80-80 80z"/></svg></div>
<div class="val"><span class="v">20.2</span><span class="u">°C</span></div>
</div></div>
</body></html>
